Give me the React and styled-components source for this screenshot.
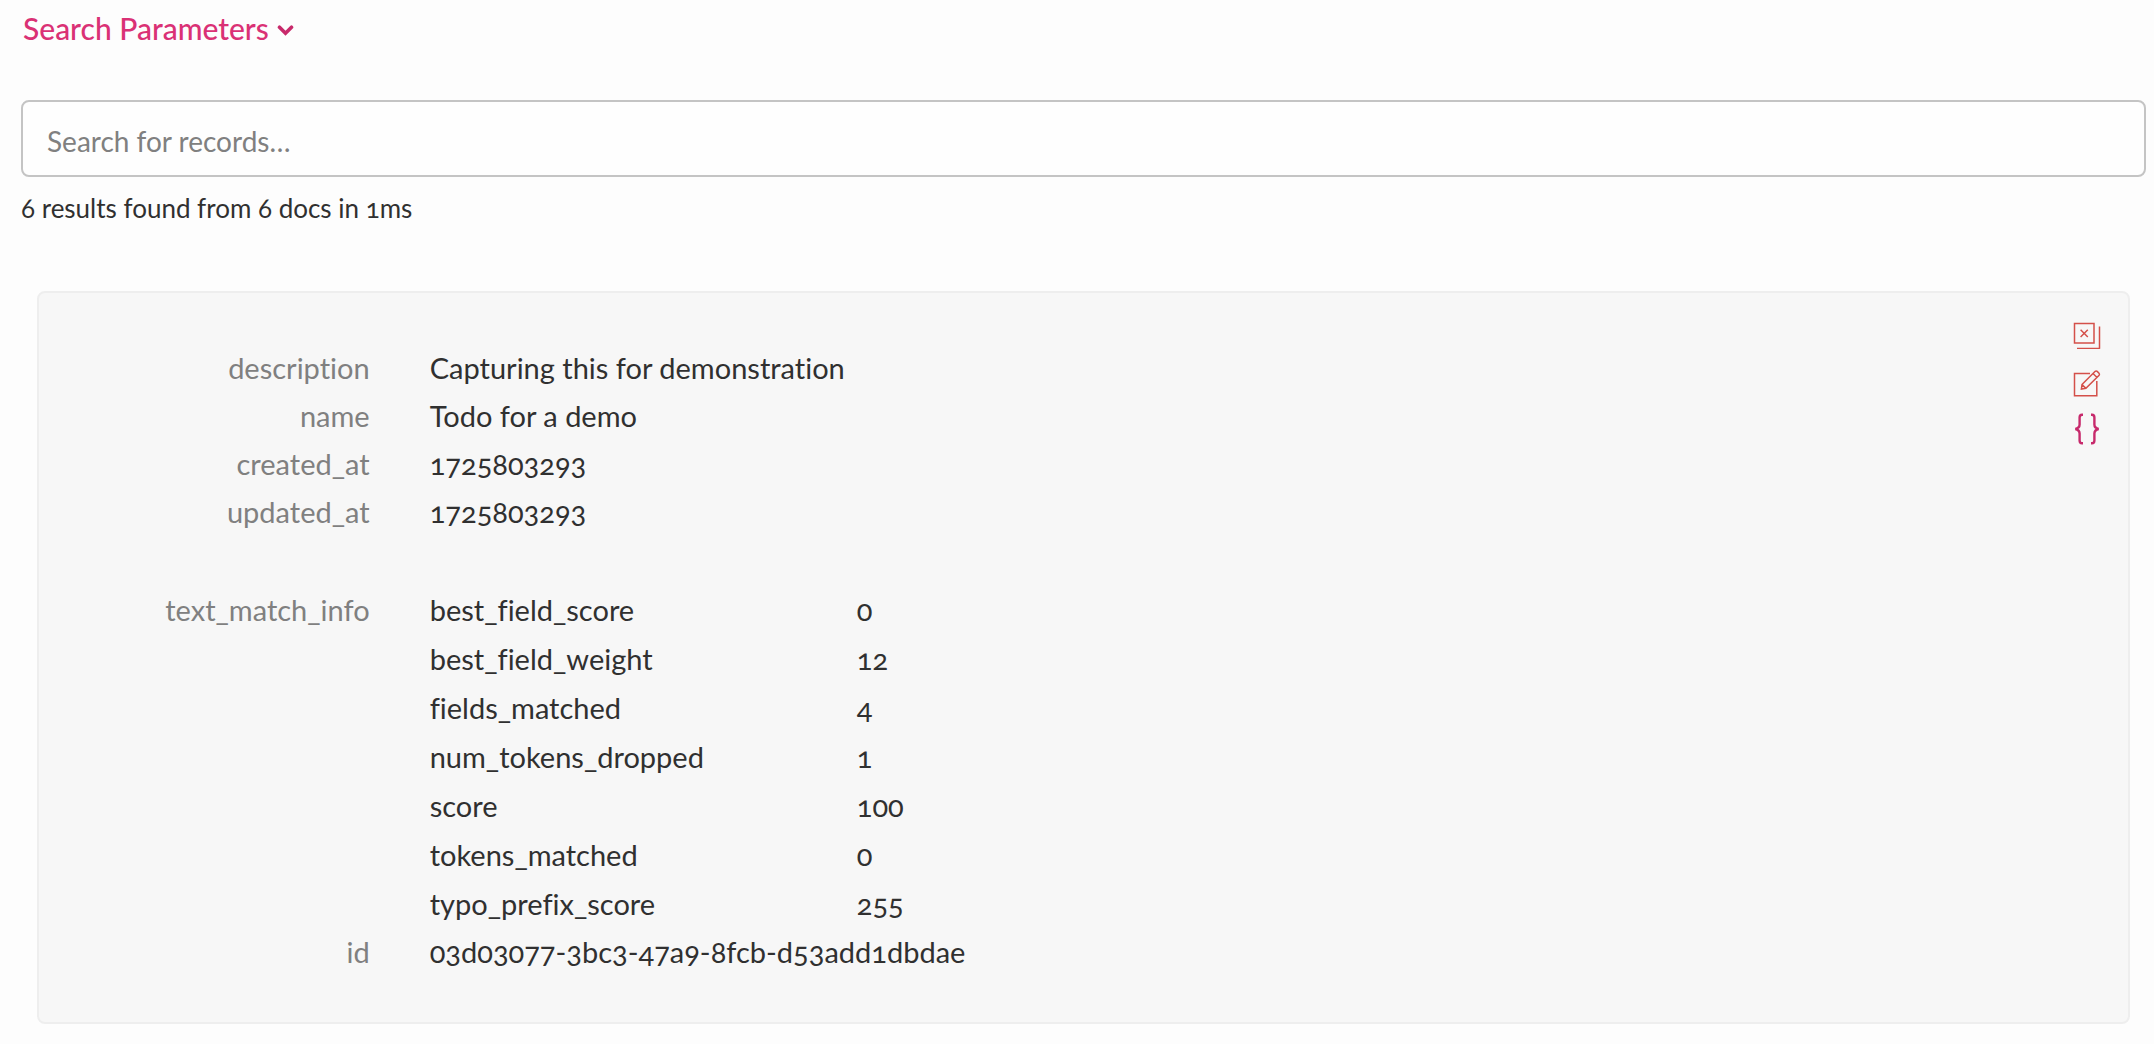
import React, { useState } from "react";
import styled, { createGlobalStyle } from "styled-components";

const GlobalStyle = createGlobalStyle`
  *, *::before, *::after { box-sizing: border-box; }
  body {
    margin: 0;
    background: #fdfdfd;
    color: #303030;
    font-family: Lato, "Noto Sans", sans-serif;
    font-size: 29px;
    line-height: 48px;
    font-variant-numeric: oldstyle-nums;
    font-variant-ligatures: none;
  }
`;

const Page = styled.main`
  padding: 4px 8px 20px 21px;
`;

const ParametersToggle = styled.button`
  display: flex;
  align-items: center;
  gap: 8px;
  padding: 0 2px;
  border: 0;
  background: none;
  color: #da3175;
  font: inherit;
  font-size: 30px;
  font-weight: 500;
  cursor: pointer;
`;

const Chevron = styled.svg`
  width: 17px;
  height: 13px;
  margin-top: 4px;
  color: #c82a6b;
`;

const SearchInput = styled.input`
  display: block;
  width: 100%;
  height: 77px;
  margin-top: 48px;
  padding: 4px 24px 0;
  border: 2px solid #c4c4c4;
  border-radius: 8px;
  background: #fefefe;
  color: inherit;
  font: inherit;
  font-size: 28px;
  outline: none;

  &::placeholder {
    color: #808080;
    opacity: 1;
  }
`;

const Stats = styled.p`
  margin: 8px 0 60px;
  font-size: 26px;
  line-height: 46px;
`;

const Card = styled.article`
  position: relative;
  margin: 0 16px;
  padding: 51px 20px 46px 19px;
  border: 2px solid #eeeeee;
  border-radius: 8px;
  background: #f7f7f7;
`;

const Fields = styled.dl`
  margin: 0;
`;

const Field = styled.div`
  display: grid;
  grid-template-columns: 1fr 5fr;
  margin-top: ${({ $spaced }) => ($spaced ? "50px" : "0")};
`;

const Label = styled.dt`
  padding-right: 30px;
  color: #808080;
  text-align: right;
`;

const Value = styled.dd`
  margin: 0;
  padding-left: 30px;
`;

const NestedFields = styled.dl`
  display: grid;
  row-gap: 1px;
  margin: 0 0 0 -30px;
`;

const NestedField = styled.div`
  display: grid;
  grid-template-columns: 1fr 3fr;
`;

const NestedLabel = styled.dt`
  padding-left: 30px;
`;

const Actions = styled.div`
  position: absolute;
  top: 24px;
  right: 26px;
  display: grid;
  gap: 16px;
`;

const ActionButton = styled.button`
  display: block;
  width: 30px;
  height: 32px;
  padding: 0;
  border: 0;
  background: none;
  color: ${({ $strong }) => ($strong ? "#c72a6c" : "#d4504a")};
  cursor: pointer;
`;

const Icon = styled.svg`
  display: block;
  width: 30px;
  height: 32px;
  fill: none;
  stroke: currentColor;
  stroke-width: ${({ $width }) => $width};
`;

const DeleteIcon = () => (
  <Icon viewBox="0 0 30 32" $width="1.5" aria-hidden="true">
    <path d="M2.5 6.5h19.5v19.5h-19.5z" />
    <path d="M27.5 9.5v22.2M27.9 31.5H5" />
    <path d="M8.6 12.8l7.2 7.2M15.8 12.8l-7.2 7.2" strokeWidth="1.5" />
  </Icon>
);

const EditIcon = () => (
  <Icon viewBox="0 0 30 32" $width="1.5" aria-hidden="true">
    <path d="M18 8.5H2.5v22.3h22.3V16" />
    <path d="M10 19.5L23.2 6.3q1-.8 2 .1l1.8 1.8q.9 1 .1 2L13.9 23.2 9.4 24zM21 8.5l3.8 3.8M10 19.5l3.9 3.7" />
  </Icon>
);

const JsonIcon = () => (
  <Icon viewBox="0 0 30 32" $width="2.4" aria-hidden="true">
    <path d="M11 1.7H10Q7.6 1.7 7.6 4.5V11.5Q7.6 15 3.4 16Q7.6 17 7.6 20.5V27.5Q7.6 30.3 10 30.3H11" />
    <path d="M19 1.7H20Q22.4 1.7 22.4 4.5V11.5Q22.4 15 26.6 16Q22.4 17 22.4 20.5V27.5Q22.4 30.3 20 30.3H19" />
  </Icon>
);

const record = [
  ["description", "Capturing this for demonstration"],
  ["name", "Todo for a demo"],
  ["created_at", "1725803293"],
  ["updated_at", "1725803293"],
  [
    "text_match_info",
    [
      ["best_field_score", "0"],
      ["best_field_weight", "12"],
      ["fields_matched", "4"],
      ["num_tokens_dropped", "1"],
      ["score", "100"],
      ["tokens_matched", "0"],
      ["typo_prefix_score", "255"],
    ],
  ],
  ["id", "03d03077-3bc3-47a9-8fcb-d53add1dbdae"],
];

function RecordField({ name, value }) {
  const nested = Array.isArray(value);
  return (
    <Field $spaced={nested}>
      <Label>{name}</Label>
      <Value>
        {nested ? (
          <NestedFields>
            {value.map(([key, item]) => (
              <NestedField key={key}>
                <NestedLabel>{key}</NestedLabel>
                <Value>{item}</Value>
              </NestedField>
            ))}
          </NestedFields>
        ) : (
          value
        )}
      </Value>
    </Field>
  );
}

export default function App() {
  const [query, setQuery] = useState("");
  return (
    <>
      <GlobalStyle />
      <Page>
        <ParametersToggle type="button">
          Search Parameters
          <Chevron viewBox="0 0 17 13" aria-hidden="true">
            <path
              d="M2.5 3.2l6 6 6-6"
              fill="none"
              stroke="currentColor"
              strokeWidth="3.6"
              strokeLinecap="round"
            />
          </Chevron>
        </ParametersToggle>
        <SearchInput
          type="search"
          aria-label="Search for records"
          placeholder="Search for records…"
          value={query}
          onChange={(event) => setQuery(event.target.value)}
        />
        <Stats>6 results found from 6 docs in 1ms</Stats>
        <Card>
          <Fields>
            {record.map(([name, value]) => (
              <RecordField key={name} name={name} value={value} />
            ))}
          </Fields>
          <Actions>
            <ActionButton type="button" aria-label="Delete record">
              <DeleteIcon />
            </ActionButton>
            <ActionButton type="button" aria-label="Edit record">
              <EditIcon />
            </ActionButton>
            <ActionButton type="button" aria-label="View JSON" $strong>
              <JsonIcon />
            </ActionButton>
          </Actions>
        </Card>
      </Page>
    </>
  );
}
